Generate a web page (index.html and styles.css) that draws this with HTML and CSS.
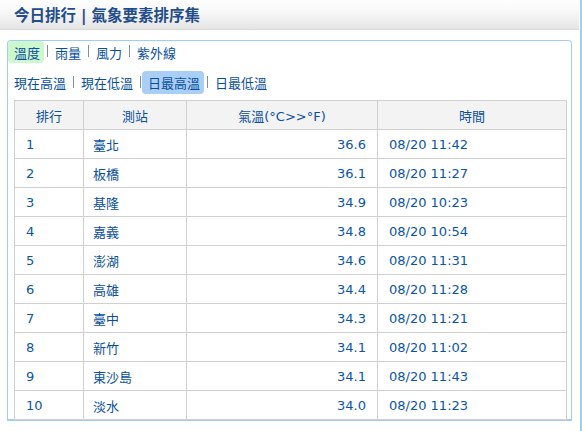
FILE: index.html
```html
<!DOCTYPE html>
<html lang="zh-Hant">
<head>
<meta charset="utf-8">
<title>今日排行｜氣象要素排序集</title>
<link rel="stylesheet" href="styles.css">
</head>
<body>
<div class="page">
  <div class="titlebar"><h1 class="title">今日排行<span class="bar">|</span>氣象要素排序集</h1></div>
  <div class="panel">
    <div class="tabs tabs-main">
      <span class="tab tab-green">溫度</span><span class="sep"></span>
      <span class="tab">雨量</span><span class="sep"></span>
      <span class="tab">風力</span><span class="sep"></span>
      <span class="tab">紫外線</span>
    </div>
    <div class="tabs tabs-sub">
      <span class="tab">現在高溫</span><span class="sep"></span>
      <span class="tab">現在低溫</span><span class="sep"></span>
      <span class="tab tab-blue">日最高溫</span><span class="sep"></span>
      <span class="tab">日最低溫</span>
    </div>
    <table class="rank">
      <colgroup>
        <col class="c1"><col class="c2"><col class="c3"><col class="c4">
      </colgroup>
      <thead>
        <tr><th>排行</th><th>測站</th><th>氣溫(°C&gt;&gt;°F)</th><th>時間</th></tr>
      </thead>
      <tbody>
        <tr><td>1</td><td>臺北</td><td class="num">36.6</td><td>08/20 11:42</td></tr>
        <tr><td>2</td><td>板橋</td><td class="num">36.1</td><td>08/20 11:27</td></tr>
        <tr><td>3</td><td>基隆</td><td class="num">34.9</td><td>08/20 10:23</td></tr>
        <tr><td>4</td><td>嘉義</td><td class="num">34.8</td><td>08/20 10:54</td></tr>
        <tr><td>5</td><td>澎湖</td><td class="num">34.6</td><td>08/20 11:31</td></tr>
        <tr><td>6</td><td>高雄</td><td class="num">34.4</td><td>08/20 11:28</td></tr>
        <tr><td>7</td><td>臺中</td><td class="num">34.3</td><td>08/20 11:21</td></tr>
        <tr><td>8</td><td>新竹</td><td class="num">34.1</td><td>08/20 11:02</td></tr>
        <tr><td>9</td><td>東沙島</td><td class="num">34.1</td><td>08/20 11:43</td></tr>
        <tr><td>10</td><td>淡水</td><td class="num">34.0</td><td>08/20 11:23</td></tr>
      </tbody>
    </table>
  </div>
</div>
</body>
</html>
```
FILE: styles.css
```css
html, body {
  margin: 0;
  padding: 0;
  background: #ffffff;
}
body {
  font-family: "DejaVu Sans", "Noto Sans CJK TC", sans-serif;
  font-size: 13px;
  color: #00509e;
}
.page {
  width: 580px;
  height: 431px;
  border-right: 2px solid #a0cdf3;
}
.titlebar {
  height: 29px;
  background: linear-gradient(#ffffff 0%, #f6f6f6 45%, #e5e5e5 100%);
  border-bottom: 1px solid #d9d9d9;
  margin-right: 1px;
}
.title {
  margin: 0;
  padding-left: 14px;
  font-family: "Noto Sans CJK TC", sans-serif;
  font-size: 15.5px;
  font-weight: bold;
  line-height: 29px;
  color: #1f4c8a;
}
.bar {
  display: inline-block;
  width: 15.5px;
  text-align: center;
  font-family: "DejaVu Sans", sans-serif;
  font-weight: bold;
  font-size: 15px;
}
.panel {
  margin: 10px 8px 0 7px;
  border: 1px solid #9fcdf3;
  border-bottom-width: 2px;
  border-radius: 4px 4px 0 0;
  height: 378px;
}
.tabs {
  display: flex;
  align-items: center;
  font-family: "Noto Sans CJK TC", sans-serif;
  color: #0a4f9e;
}
.tabs-main {
  height: 22px;
}
.tabs-sub {
  height: 23px;
  margin-top: 8px;
}
.tab {
  display: flex;
  align-items: center;
  height: 100%;
  padding: 0 4px 0 6px;
  border-radius: 4px;
  line-height: 1;
}
.tab-green {
  background: #cdf7cc;
}
.tab-blue {
  background: #a9cff6;
}
.sep {
  width: 1px;
  height: 12px;
  margin: 0 1px 0 3px;
  background: #7d8fa8;
  align-self: center;
  position: relative;
  top: -1px;
}
.rank {
  margin: 6px 0 0 6px;
  border-collapse: collapse;
  width: 552px;
  table-layout: fixed;
}
.c1 { width: 69px; }
.c2 { width: 103px; }
.c3 { width: 191px; }
.c4 { width: 189px; }
.rank th,
.rank td {
  border: 1px solid #d0d0d0;
  height: 28px;
  padding: 0 11px;
  font-weight: normal;
  white-space: nowrap;
}
.rank th {
  background: #f3f3f3;
  text-align: center;
  font-family: "Noto Sans CJK TC", sans-serif;
  color: #0a4f9e;
}
.rank th:nth-child(3) {
  font-family: "DejaVu Sans", "Noto Sans CJK TC", sans-serif;
}
.rank td {
  text-align: left;
  color: #0a55a8;
}
.rank td:nth-child(2) {
  padding-left: 9px;
  font-family: "Noto Sans CJK TC", sans-serif;
  color: #0a4f9e;
}
.rank td.num {
  text-align: right;
}
```
